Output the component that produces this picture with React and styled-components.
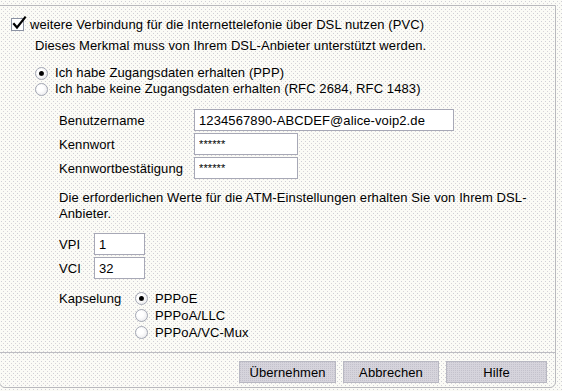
import React from 'react';
import styled, { createGlobalStyle } from 'styled-components';

const GlobalStyle = createGlobalStyle`
  html, body {
    margin: 0;
    padding: 0;
  }
  body {
    width: 562px;
    height: 391px;
    overflow: hidden;
    font-family: 'Liberation Sans', Arial, sans-serif;
    font-size: 13px;
    letter-spacing: 0.1px;
    color: #000;
    background-color: #fbfbf6;
    background-image:
      conic-gradient(at 1px 1px, transparent 75%, #cfcfd6 0),
      conic-gradient(at 1px 1px, transparent 75%, #d8d4d8 0);
    background-size: 4px 4px, 4px 4px;
    background-position: 1px 1px, 3px 3px;
  }
`;

const Frame = styled.div`
  margin: 5px 0 0 -1px;
  width: 557px;
  height: 383px;
  box-sizing: border-box;
  border: 1px solid #b9b9bd;
  border-radius: 0 0 6px 6px;
  display: flex;
  flex-direction: column;
`;

const CheckRow = styled.label`
  display: flex;
  align-items: center;
  gap: 6px;
  margin-top: 11px;
  padding-left: 11px;
  height: 15px;
  line-height: 15px;
`;

const Box = styled.span`
  position: relative;
  width: 11px;
  height: 11px;
  border: 1px solid #8c93a3;
  background: #fff;
  flex: none;

  & svg {
    position: absolute;
    left: 1px;
    top: -3px;
    overflow: visible;
  }
`;

const Note = styled.div`
  margin-top: 6px;
  padding-left: 35px;
  line-height: 16px;
`;

const RadioGroup = styled.div`
  display: flex;
  flex-direction: column;
  margin-top: ${(p) => p.$top || 0}px;
  padding-left: ${(p) => p.$left || 0}px;
`;

const RadioRow = styled.label`
  display: flex;
  align-items: center;
  gap: 7px;
  height: ${(p) => p.$h || 16}px;
  line-height: 16px;
`;

const Dot = styled.span`
  position: relative;
  width: 11px;
  height: 11px;
  border-radius: 50%;
  border: 1px solid #a4a8b4;
  background: radial-gradient(circle at 40% 40%, #ffffff 30%, #e2e2e6 100%);
  flex: none;

  &::after {
    content: '';
    display: ${(p) => (p.$on ? 'block' : 'none')};
    position: absolute;
    left: 3px;
    top: 3px;
    width: 5px;
    height: 5px;
    border-radius: 50%;
    background: radial-gradient(circle at 40% 40%, #000 45%, #555 100%);
  }
`;

const Fields = styled.div`
  display: grid;
  grid-template-columns: ${(p) => p.$label}px auto;
  grid-auto-rows: 22px;
  row-gap: 2px;
  align-items: center;
  margin-top: ${(p) => p.$top}px;
  padding-left: 59px;
`;

const Input = styled.input`
  box-sizing: border-box;
  width: ${(p) => p.$w}px;
  height: 22px;
  margin: 0;
  padding: 0 4px;
  border: 1px solid #a7a8b6;
  background: #fff;
  font-family: 'Liberation Sans', Arial, sans-serif;
  font-size: ${(p) => (p.$secret ? 11 : 13)}px;
  letter-spacing: 0.1px;
  color: #000;
  outline: none;
`;

const Para = styled.p`
  margin: 11px 0 0 59px;
  width: 470px;
  line-height: 16px;
`;

const Kapsel = styled.div`
  display: grid;
  grid-template-columns: 76px auto;
  align-items: start;
  margin-top: 11px;
  padding-left: 59px;
`;

const KapselLabel = styled.span`
  line-height: 17px;
`;

const Separator = styled.hr`
  margin: 11px 0 0;
  border: 0;
  border-top: 1px solid #bdbdc2;
  height: 0;
`;

const ButtonBar = styled.div`
  display: flex;
  justify-content: flex-end;
  gap: 7px;
  margin-top: 8px;
  padding-right: 8px;
`;

const Button = styled.button`
  width: ${(p) => p.$w}px;
  height: 22px;
  margin: 0;
  padding: 0;
  border: 1px solid #b8b8c2;
  background-color: #d6d4dc;
  background-image: conic-gradient(at 1px 1px, transparent 75%, #c4c2cc 0);
  background-size: 2px 2px;
  font-family: 'Liberation Sans', Arial, sans-serif;
  font-size: 13px;
  letter-spacing: 0.1px;
  color: #000;
`;

function Radio({ on, children, h }) {
  return (
    <RadioRow $h={h}>
      <Dot $on={on} />
      <span>{children}</span>
    </RadioRow>
  );
}

export default function App() {
  return (
    <>
      <GlobalStyle />
      <Frame>
        <CheckRow>
          <Box>
            <svg width="14" height="14" viewBox="0 0 14 14">
              <path d="M1 8 L4 11.5 L12 1.5" fill="none" stroke="#000" strokeWidth="2.2" strokeLinecap="square" />
            </svg>
          </Box>
          <span>weitere Verbindung für die Internettelefonie über DSL nutzen (PVC)</span>
        </CheckRow>
        <Note>Dieses Merkmal muss von Ihrem DSL-Anbieter unterstützt werden.</Note>

        <RadioGroup $top={11} $left={35}>
          <Radio on>Ich habe Zugangsdaten erhalten (PPP)</Radio>
          <Radio>Ich habe keine Zugangsdaten erhalten (RFC 2684, RFC 1483)</Radio>
        </RadioGroup>

        <Fields $label={135} $top={12}>
          <span>Benutzername</span>
          <Input $w={260} defaultValue="1234567890-ABCDEF@alice-voip2.de" />
          <span>Kennwort</span>
          <Input $w={104} $secret defaultValue="******" />
          <span>Kennwortbestätigung</span>
          <Input $w={104} $secret defaultValue="******" />
        </Fields>

        <Para>Die erforderlichen Werte für die ATM-Einstellungen erhalten Sie von Ihrem DSL-Anbieter.</Para>

        <Fields $label={35} $top={11}>
          <span>VPI</span>
          <Input $w={51} defaultValue="1" />
          <span>VCI</span>
          <Input $w={51} defaultValue="32" />
        </Fields>

        <Kapsel>
          <KapselLabel>Kapselung</KapselLabel>
          <RadioGroup>
            <Radio on h={17}>PPPoE</Radio>
            <Radio h={17}>PPPoA/LLC</Radio>
            <Radio h={17}>PPPoA/VC-Mux</Radio>
          </RadioGroup>
        </Kapsel>

        <Separator />

        <ButtonBar>
          <Button $w={97}>Übernehmen</Button>
          <Button $w={96}>Abbrechen</Button>
          <Button $w={101}>Hilfe</Button>
        </ButtonBar>
      </Frame>
    </>
  );
}
